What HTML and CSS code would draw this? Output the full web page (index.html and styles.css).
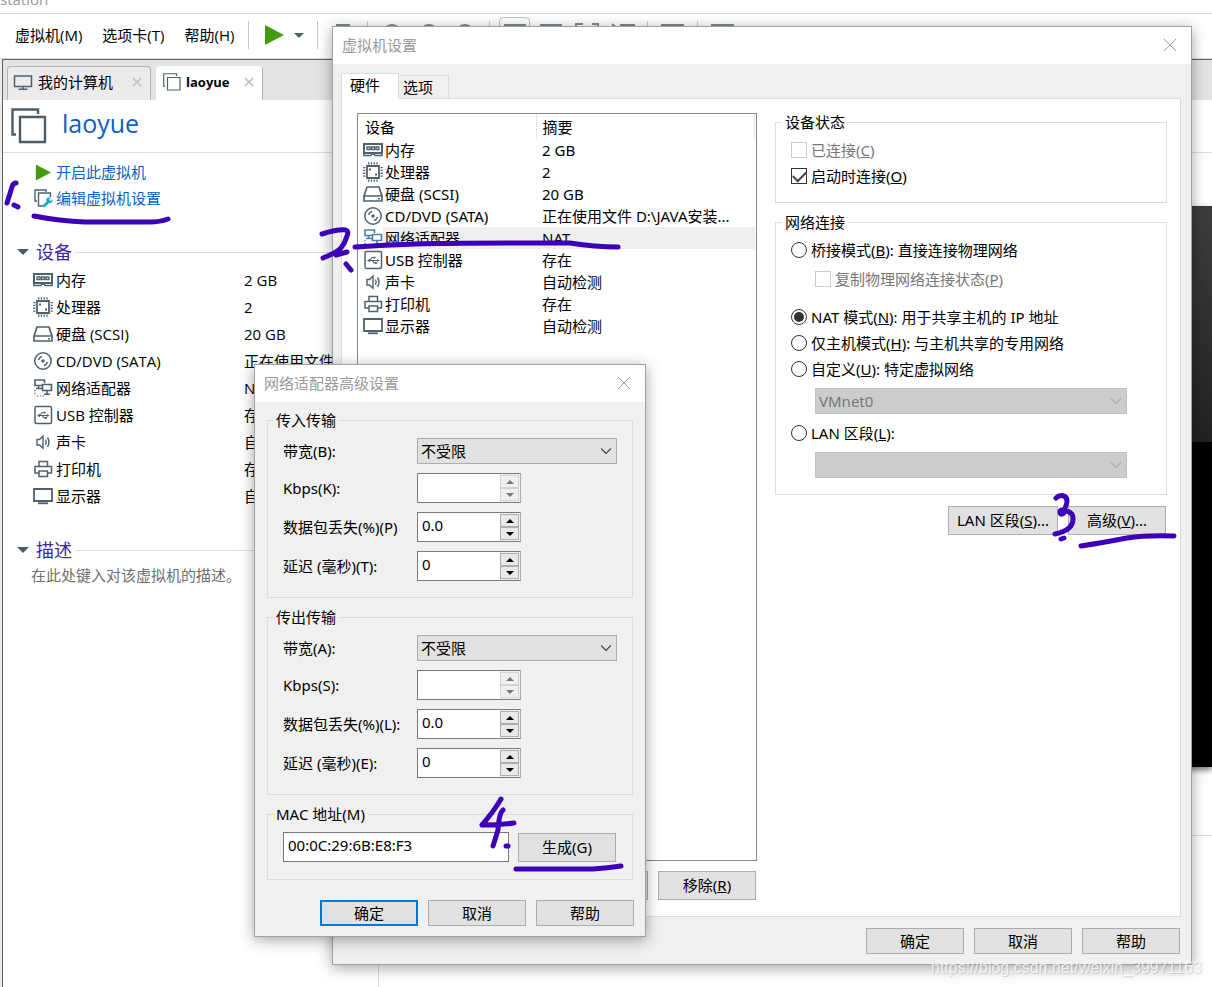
FILE: index.html
```html
<!DOCTYPE html>
<html lang="zh-CN">
<head>
<meta charset="utf-8">
<title>Workstation</title>
<link rel="stylesheet" href="styles.css">
</head>
<body>
<svg class="defs" aria-hidden="true">
  <symbol id="i-memory" viewBox="0 0 20 20"><g fill="none" stroke="currentColor"><path d="M1 4h18v9H1z" stroke-width="2"/><path d="M4 7h3v2.500H4zM8.500 7h3v2.500h-3zM13 7h3v2.500h-3z" stroke-width="1.300"/><path d="M1 13v2.500h7l1-1.500h2l1 1.500h7V13" stroke-width="1.500"/></g></symbol>
  <symbol id="i-cpu" viewBox="0 0 20 20"><g fill="none" stroke="currentColor"><path d="M4 4h12v12H4z" stroke-width="1.800"/><path d="M5 1.300h10M5 18.700h10" stroke-width="2.200" stroke-dasharray="1.300 1.500"/><path d="M1.300 5v10M18.700 5v10" stroke-width="2.200" stroke-dasharray="1.300 1.500"/></g><path fill="currentColor" d="M6 6.500h2v2H6zM12 11.500h2v2h-2z"/></symbol>
  <symbol id="i-disk" viewBox="0 0 20 20"><g fill="none" stroke="currentColor" stroke-width="1.700"><path d="M1 12 4 3h12l3 9v5H1zM1 12h18"/></g><path fill="currentColor" d="M15 14h2v1.500h-2z"/></symbol>
  <symbol id="i-cd" viewBox="0 0 20 20"><g fill="none" stroke="currentColor" stroke-width="1.500"><circle cx="10" cy="10" r="8.200"/><path d="M5.500 9A5 5 0 0 1 9 5.500M14.500 11a5 5 0 0 1-3.500 3.500"/></g><circle cx="10" cy="10" r="1.700" fill="currentColor"/></symbol>
  <symbol id="i-net" viewBox="0 0 20 20"><g fill="none" stroke="currentColor" stroke-width="1.600"><path d="M9 7.500H2V2h9.500v3M9.500 6.500h9v6h-9z"/><path d="M5.500 7.500v3M3 10.500h6M14 12.500v3.500M11 16.300h6"/><path d="M2 12v6M4 18h8" stroke-dasharray="1.300 1.500" stroke-width="1.200"/></g></symbol>
  <symbol id="i-usb" viewBox="0 0 20 20"><g fill="none" stroke="currentColor" stroke-width="1.500"><rect x="2" y="1.500" width="16.500" height="17" rx="1.500"/><path d="M5 10.500h10M7 10.500l2-3h2M9 10.500l2 2.500h2" stroke-width="1.100"/></g><path fill="currentColor" d="M4 10.500 7 8.800v3.400zM10.500 6.700h2v1.800h-2zM12 12h2v1.800h-2zM14 9l2.500 1.500L14 12z"/></symbol>
  <symbol id="i-sound" viewBox="0 0 20 20"><g fill="none" stroke="currentColor" stroke-width="1.400"><path d="M4 7.500h2.500L10 4.200v12L6.500 13H4zM12.500 7.500q1.500 2.700 0 5.400M14.500 5.500q3 4.700 0 9.400"/></g></symbol>
  <symbol id="i-print" viewBox="0 0 20 20"><g fill="none" stroke="currentColor" stroke-width="1.500"><path d="M6 7V2.500h8.500V7M6 14H2V7.500h16.500V14H14"/><path d="M6 12h8.500v5.500H6z"/></g></symbol>
  <symbol id="i-display" viewBox="0 0 20 20"><g fill="none" stroke="currentColor" stroke-width="1.800"><path d="M1 3h18v12H1z"/><path d="M5 17.300h10"/></g></symbol>
  <symbol id="i-pc" viewBox="0 0 20 20"><g fill="none" stroke="currentColor" stroke-width="1.500"><path d="M1.500 4h17v10.500h-17z"/><path d="M10 14.500V17M5.500 17.300h9"/></g></symbol>
  <symbol id="i-vm" viewBox="0 0 36 36"><g fill="none" stroke="currentColor" stroke-width="2.400"><path d="M5 26.500H1.500V1.500H27V6"/><path d="M9 9h25v25H9z"/></g></symbol>
  <symbol id="i-vmedit" viewBox="0 0 20 20"><g fill="none" stroke="#50616e" stroke-width="1.400"><path d="M4 13H2V2h11v2"/><path d="M11 18H5.500V5h12v4"/></g><path d="M10.500 18.500l5-5" stroke="#10a9c9" stroke-width="2.600"/><path d="M13.500 13.500a3 3 0 0 1 4-4l-1.500 2 1.500 1.500 2-1.500a3 3 0 0 1-4 3.500z" fill="#10a9c9"/></symbol>
  <symbol id="i-play" viewBox="0 0 20 20"><path d="M1 0 20 10 1 20z" fill="#46980f"/></symbol>
  <symbol id="i-x" viewBox="0 0 12 12"><path d="M0 0 12 12M12 0 0 12" fill="none" stroke="currentColor"/></symbol>
  <symbol id="i-xb" viewBox="0 0 12 12"><path d="M1 1 11 11M11 1 1 11" fill="none" stroke="currentColor" stroke-width="2.200"/></symbol>
  <symbol id="i-chev" viewBox="0 0 10 6"><path d="M0 .5 5 5.500 10 .5" fill="none" stroke="currentColor" stroke-width="1.200"/></symbol>
  <symbol id="i-down" viewBox="0 0 12 6"><path d="M0 0h12L6 6z" fill="currentColor"/></symbol>
  <symbol id="i-up" viewBox="0 0 12 6"><path d="M0 6h12L6 0z" fill="currentColor"/></symbol>
</svg>

<div class="desktop">
  <header class="titlebar">station</header>
  <nav class="menubar">
    <div class="menus">
      <button>虚拟机(M)</button>
      <button>选项卡(T)</button>
      <button>帮助(H)</button>
    </div>
    <span class="sep"></span>
    <button class="play" aria-label="启动"><svg width="20" height="20"><use href="#i-play"/></svg></button>
    <button class="play" aria-label="电源选项"><svg class="slate" width="10" height="5"><use href="#i-down"/></svg></button>
    <span class="sep"></span>
    <svg class="tools" width="404" height="36" viewBox="0 0 404 36" aria-hidden="true">
      <g fill="none" stroke="#7d8890" stroke-width="2"><path d="M1 24V8h12v16M169 8h20v14h-20zM205 8h20v14h-20zM240 12V7h7M256 7h6v5M276 7l6 5M284 8h14v14M326 8h21v14h-21zM376 8h21v14h-21z"/><circle cx="56" cy="17" r="9"/><circle cx="93" cy="17" r="9"/><circle cx="129" cy="17" r="9"/></g>
      <rect x="163.500" y=".5" width="30" height="34" rx="4" fill="none" stroke="#c0c0c0"/>
      <path d="M31.500 4v28M153.500 4v28M311.500 4v28M361.500 4v28" stroke="#c8c8c8"/>
    </svg>
  </nav>
  <div class="frame">
    <div class="tabs">
      <div class="tab"><svg width="20" height="20"><use href="#i-pc"/></svg><span>我的计算机</span><button aria-label="关闭标签"><svg width="10" height="10"><use href="#i-xb"/></svg></button></div>
      <div class="tab current"><svg width="18" height="18"><use href="#i-vm"/></svg><span>laoyue</span><button aria-label="关闭标签"><svg width="10" height="10"><use href="#i-xb"/></svg></button></div>
    </div>
    <div class="vmhead"><svg width="36" height="36"><use href="#i-vm"/></svg><h1>laoyue</h1></div>
    <div class="content">
      <aside class="side">
        <div class="links">
          <a href="#"><svg width="16" height="17"><use href="#i-play"/></svg>开启此虚拟机</a>
          <a href="#"><svg width="20" height="20"><use href="#i-vmedit"/></svg>编辑虚拟机设置</a>
        </div>
        <h2><svg width="12" height="6"><use href="#i-down"/></svg><span>设备</span></h2>
        <table class="hw">
          <tr><th><svg><use href="#i-memory"/></svg>内存</th><td>2 GB</td></tr>
          <tr><th><svg><use href="#i-cpu"/></svg>处理器</th><td>2</td></tr>
          <tr><th><svg><use href="#i-disk"/></svg>硬盘 (SCSI)</th><td>20 GB</td></tr>
          <tr><th><svg><use href="#i-cd"/></svg>CD/DVD (SATA)</th><td>正在使用文件</td></tr>
          <tr><th><svg><use href="#i-net"/></svg>网络适配器</th><td>NAT</td></tr>
          <tr><th><svg><use href="#i-usb"/></svg>USB 控制器</th><td>存在</td></tr>
          <tr><th><svg><use href="#i-sound"/></svg>声卡</th><td>自动检测</td></tr>
          <tr><th><svg><use href="#i-print"/></svg>打印机</th><td>存在</td></tr>
          <tr><th><svg><use href="#i-display"/></svg>显示器</th><td>自动检测</td></tr>
        </table>
        <h2 class="desc"><svg width="12" height="6"><use href="#i-down"/></svg><span>描述</span></h2>
        <p>在此处键入对该虚拟机的描述。</p>
      </aside>
      <main class="stage"><div class="preview"></div><hr></main>
    </div>
  </div>

  <section class="dialog settings" aria-label="虚拟机设置">
    <div class="dtitle"><span>虚拟机设置</span><button aria-label="关闭"><svg width="12" height="12"><use href="#i-x"/></svg></button></div>
    <div class="pagetabs"><button class="on">硬件</button><button>选项</button></div>
    <div class="page">
      <div class="left">
        <div class="listbox">
          <table class="list">
            <thead><tr><th>设备</th><th>摘要</th></tr></thead>
            <tbody>
              <tr><td><svg><use href="#i-memory"/></svg><span>内存</span></td><td>2 GB</td></tr>
              <tr><td><svg><use href="#i-cpu"/></svg><span>处理器</span></td><td>2</td></tr>
              <tr><td><svg><use href="#i-disk"/></svg><span>硬盘 (SCSI)</span></td><td>20 GB</td></tr>
              <tr><td><svg><use href="#i-cd"/></svg><span>CD/DVD (SATA)</span></td><td>正在使用文件 D:\JAVA安装...</td></tr>
              <tr class="sel"><td><svg><use href="#i-net"/></svg><span>网络适配器</span></td><td>NAT</td></tr>
              <tr><td><svg><use href="#i-usb"/></svg><span>USB 控制器</span></td><td>存在</td></tr>
              <tr><td><svg><use href="#i-sound"/></svg><span>声卡</span></td><td>自动检测</td></tr>
              <tr><td><svg><use href="#i-print"/></svg><span>打印机</span></td><td>存在</td></tr>
              <tr><td><svg><use href="#i-display"/></svg><span>显示器</span></td><td>自动检测</td></tr>
            </tbody>
          </table>
        </div>
        <div class="btnrow"><button class="btn tall" aria-label="添加"></button><button class="btn tall">移除(<u>R</u>)</button></div>
      </div>
      <div class="right">
        <fieldset class="state">
          <legend>设备状态</legend>
          <label class="off"><input type="checkbox" disabled>已连接(<u>C</u>)</label>
          <label><input type="checkbox" checked>启动时连接(<u>O</u>)</label>
        </fieldset>
        <fieldset class="conn">
          <legend>网络连接</legend>
          <label><input type="radio" name="net">桥接模式(<u>B</u>): 直接连接物理网络</label>
          <label class="off sub"><input type="checkbox" disabled>复制物理网络连接状态(<u>P</u>)</label>
          <label><input type="radio" name="net" checked>NAT 模式(<u>N</u>): 用于共享主机的 IP 地址</label>
          <label><input type="radio" name="net">仅主机模式(<u>H</u>): 与主机共享的专用网络</label>
          <label><input type="radio" name="net">自定义(<u>U</u>): 特定虚拟网络</label>
          <div class="combo wide"><select disabled aria-label="特定虚拟网络"><option>VMnet0</option></select><svg width="10" height="6"><use href="#i-chev"/></svg></div>
          <label><input type="radio" name="net">LAN 区段(<u>L</u>):</label>
          <div class="combo wide"><select disabled aria-label="LAN 区段"><option></option></select><svg width="10" height="6"><use href="#i-chev"/></svg></div>
        </fieldset>
        <div class="btnrow"><button class="btn tall lan">LAN 区段(<u>S</u>)...</button><button class="btn tall">高级(<u>V</u>)...</button></div>
      </div>
    </div>
    <div class="btnrow foot"><button class="btn">确定</button><button class="btn">取消</button><button class="btn">帮助</button></div>
  </section>

  <section class="dialog advanced" aria-label="网络适配器高级设置">
    <div class="dtitle"><span>网络适配器高级设置</span><button aria-label="关闭"><svg width="12" height="12"><use href="#i-x"/></svg></button></div>
    <form class="dbody">
      <fieldset class="xfer">
        <legend>传入传输</legend>
        <label for="bw1">带宽(B):</label><div class="combo"><select id="bw1"><option>不受限</option></select><svg width="10" height="6"><use href="#i-chev"/></svg></div>
        <label for="k1">Kbps(K):</label><div class="spin dim"><input id="k1" type="text" disabled><button type="button" disabled aria-label="增加"><svg><use href="#i-up"/></svg></button><button type="button" disabled aria-label="减少"><svg><use href="#i-down"/></svg></button></div>
        <label for="p1">数据包丢失(%)(P)</label><div class="spin"><input id="p1" type="text" value="0.0"><button type="button" aria-label="增加"><svg><use href="#i-up"/></svg></button><button type="button" aria-label="减少"><svg><use href="#i-down"/></svg></button></div>
        <label for="t1">延迟 (毫秒)(T):</label><div class="spin"><input id="t1" type="text" value="0"><button type="button" aria-label="增加"><svg><use href="#i-up"/></svg></button><button type="button" aria-label="减少"><svg><use href="#i-down"/></svg></button></div>
      </fieldset>
      <fieldset class="xfer">
        <legend>传出传输</legend>
        <label for="bw2">带宽(A):</label><div class="combo"><select id="bw2"><option>不受限</option></select><svg width="10" height="6"><use href="#i-chev"/></svg></div>
        <label for="k2">Kbps(S):</label><div class="spin dim"><input id="k2" type="text" disabled><button type="button" disabled aria-label="增加"><svg><use href="#i-up"/></svg></button><button type="button" disabled aria-label="减少"><svg><use href="#i-down"/></svg></button></div>
        <label for="p2">数据包丢失(%)(L):</label><div class="spin"><input id="p2" type="text" value="0.0"><button type="button" aria-label="增加"><svg><use href="#i-up"/></svg></button><button type="button" aria-label="减少"><svg><use href="#i-down"/></svg></button></div>
        <label for="t2">延迟 (毫秒)(E):</label><div class="spin"><input id="t2" type="text" value="0"><button type="button" aria-label="增加"><svg><use href="#i-up"/></svg></button><button type="button" aria-label="减少"><svg><use href="#i-down"/></svg></button></div>
      </fieldset>
      <fieldset class="mac">
        <legend>MAC 地址(M)</legend>
        <input type="text" value="00:0C:29:6B:E8:F3" aria-label="MAC 地址"><button type="button" class="btn tall">生成(G)</button>
      </fieldset>
      <div class="btnrow foot"><button type="button" class="btn primary">确定</button><button type="button" class="btn">取消</button><button type="button" class="btn">帮助</button></div>
    </form>
  </section>

  <svg class="ink" width="1212" height="987" viewBox="0 0 1212 987" aria-hidden="true">
    <path d="M16 183q-3 0-4 4l-5 16M14 205l4 2"/>
    <path d="M34 216q26 5 51 6h65q10 0 18-3"/>
    <path d="M322 234q16-5 24-4 3 1 1 6-2 7-6 12-5 5-18 10M336 255l11-3M346 264l5 6"/>
    <path d="M355 247q30-2 60-3 30-1 92-1h63q25 4 48 4"/>
    <path d="M1056 498c4-4 11-3 11 3s-3 9-6 13c4-5 12-3 12 5 0 9-8 13-18 15M1061 539l3-1"/><circle cx="1062" cy="512" r="2"/>
    <path d="M1081 546q20-3 46-8 20-3 47-2"/>
    <path d="M501 799q-7 12-19 26 16 0 32-2M503 810q-4 3-5 20l-5 16M506 846h2"/>
    <path d="M516 869h77q15-1 28-3"/>
  </svg>
  <div class="watermark">https://blog.csdn.net/weixin_39971163</div>
</div>
</body>
</html>
```
FILE: styles.css
```css
* { box-sizing: border-box; }
body {
  margin: 0;
  font: 15px/20px "Noto Sans", "Noto Sans CJK SC", sans-serif;
  color: #000;
  background: #fff;
}
button, input, select { font: inherit; color: inherit; margin: 0; padding: 0; border-radius: 0; }
button { background: none; border: 0; white-space: nowrap; }
svg { flex: none; display: block; }
.defs { position: absolute; width: 0; height: 0; }

.desktop {
  position: relative;
  display: flex;
  flex-direction: column;
  min-height: 100vh;
  overflow: hidden;
  font-family: "Open Sans", "Noto Sans CJK SC", sans-serif;
}

/* main window */
.titlebar {
  display: flex;
  align-items: flex-end;
  height: 14px;
  padding-bottom: 4px;
  overflow: hidden;
  border-bottom: 1px solid #dcdcdc;
  color: #999;
}
.menubar {
  display: flex;
  align-items: center;
  height: 45px;
  padding: 0 0 2px 15px;
  border-bottom: 1px solid #ddd;
}
.menus { display: flex; gap: 20px; margin-right: 14px; }
.menubar .play { margin-right: 10px; }
.menubar .sep { width: 1px; height: 28px; background: #c4c4c4; }
.menubar .sep + .play { margin-left: 15px; }
.menubar .play + .sep { margin-left: 3px; }
.tools { margin-left: 18px; }
.slate { color: #50616e; }
.frame {
  flex: 1;
  display: flex;
  flex-direction: column;
  margin-left: 2px;
  border: solid #626262;
  border-width: 1px 0 0 1px;
  box-shadow: -2px 0 #ececec;
}
.tabs {
  display: flex;
  gap: 5px;
  height: 40px;
  padding: 6px 4px 0;
  background: #e2e3e5;
}
.tab {
  display: flex;
  align-items: center;
  gap: 5px;
  padding: 0 8px 3px 5px;
  border: 1px solid #b4b4b4;
  border-bottom: 0;
  border-radius: 4px 4px 0 0;
  background: #ebebec;
}
.tab svg { color: #50616e; }
.tab button { margin-left: 14px; }
.tab button svg { color: #c4c4c4; }
.tab.current { padding-left: 6px; background: #fff; border-color: #fff #b4b4b4 #fff #fff; font-weight: bold; font-size: 13px; }
.tab.current button { margin-left: 9px; }
.vmhead {
  display: flex;
  align-items: center;
  gap: 15px;
  height: 53px;
  padding-left: 8px;
  border-bottom: 1px solid #dcdcdc;
  color: #4a5c69;
}
.vmhead h1 { margin: 0 0 6px; font-size: 25px; line-height: 32px; font-weight: normal; color: #0b60c8; }
.content { flex: 1; display: flex; }
.side { width: 376px; border-right: 1px solid #dcdcdc; }
.links { display: flex; flex-direction: column; align-items: flex-start; padding: 6px 0 0 30px; }
.links a { display: flex; align-items: center; gap: 3px; height: 26px; color: #0b60c8; text-decoration: none; }
.links a:first-child svg { margin: 0 2px; }
.side h2 {
  display: flex;
  align-items: center;
  gap: 7px;
  margin: 29px 0 0;
  padding-left: 14px;
  font-size: 18px;
  line-height: 24px;
  font-weight: normal;
  color: #4026a0;
}
.side h2 svg { color: #4a5c69; }
.side h2::after { content: ""; flex: 1; height: 1px; margin-left: -4px; background: #dcdcdc; }
.side p { margin: 3px 0 0 28px; color: #707070; }
.hw { margin: 2px 0 0 30px; border-collapse: collapse; }
.hw th { display: flex; align-items: center; gap: 3px; width: 211px; height: 27px; padding: 0; font-weight: normal; }
.hw td { padding: 0; white-space: nowrap; }
.hw svg, .list svg { width: 20px; height: 20px; color: #50616e; }
.stage { flex: 1; padding-top: 53px; }
.preview {
  height: 561px;
  background: linear-gradient(#3d3d3d, #222 42%, #000 42%);
  box-shadow: 0 3px 6px #777;
}
.stage hr { margin: 68px 0 0; border: 0; border-top: 1px solid #dcdcdc; }

/* dialogs */
.dialog {
  position: absolute;
  display: flex;
  flex-direction: column;
  border: 1px solid #a0a0a0;
  background: #f0f0f0;
  box-shadow: 0 3px 14px rgba(0, 0, 0, .36);
  font-family: "Noto Sans", "Noto Sans CJK SC", sans-serif;
}
.settings { left: 332px; top: 26px; right: 20px; bottom: 22px; }
.advanced { left: 254px; top: 364px; width: 392px; }
.dtitle {
  display: flex;
  align-items: center;
  justify-content: space-between;
  height: 37px;
  padding: 0 15px 2px 9px;
  background: #fff;
  color: #999;
}
.pagetabs { display: flex; align-items: flex-end; padding: 9px 0 0 8px; }
.pagetabs button { height: 23px; padding: 0 15px 0 4px; border: 1px solid #dcdcdc; border-width: 1px 1px 0 0; }
.pagetabs .on {
  height: 26px;
  margin-bottom: -1px;
  padding: 0 18px 3px 8px;
  border-left-width: 1px;
  background: #fff;
  z-index: 1;
}
.page {
  flex: 1;
  display: flex;
  gap: 18px;
  margin: 0 10px 0 8px;
  padding: 13px 13px 16px 15px;
  border: 1px solid #dcdcdc;
  background: #fff;
}
.left { display: flex; flex-direction: column; gap: 10px; width: 400px; margin-top: 1px; }
.right { flex: 1; }
.listbox { flex: 1; border: 1px solid #828790; }
.list { width: 397px; border-collapse: collapse; }
.list th { height: 25px; padding: 0 0 0 7px; border-right: 1px solid #e5e5e5; font-weight: normal; text-align: left; }
.list th:first-child { width: 178px; }
.list th + th { padding-left: 6px; }
.list td { height: 22px; padding: 0 0 0 6px; line-height: 20px; white-space: nowrap; }
.list td:first-child { display: flex; align-items: center; padding-left: 5px; }
.list td span { flex: 1; padding-left: 2px; line-height: 22px; }
.list .sel td + td, .list .sel span { background: #efefef; }
.list .sel svg { color: #4b7fa5; }
.btnrow { display: flex; justify-content: flex-end; gap: 10px; }
.left .btnrow { padding-right: 1px; }
.right .btnrow { padding: 11px 1px 0 0; }
.btn { width: 98px; height: 26px; border: 1px solid #adadad; background: #e1e1e1; }
.btn.tall { height: 29px; padding-bottom: 2px; }
.btn.lan { width: 110px; }
.btn.primary { border: 2px solid #0078d7; }
.settings > .foot { padding: 11px 11px 10px 0; }

fieldset { min-width: 0; margin: 0; border: 1px solid #dcdcdc; }
legend { padding: 0 3px; line-height: 20px; }
.state, .conn { display: flex; flex-direction: column; align-items: flex-start; padding: 5px 6px 13px; }
.conn { margin-top: 9px; padding-bottom: 16px; }
.right label { display: flex; align-items: center; height: 26px; margin-left: 9px; white-space: pre; }
.right label.off { color: #777; }
.right label.sub { margin: 3px 0 12px 33px; }
.right label input {
  appearance: none;
  display: grid;
  place-items: center;
  width: 16px;
  height: 16px;
  margin-right: 4px;
  border: 1px solid #333;
  background: #fff;
}
.right label input:disabled { border-color: #ccc; }
.right label input[type="radio"] { border-radius: 50%; }
.right label input[type="radio"]:checked::after { content: ""; width: 10px; height: 10px; border-radius: 50%; background: #333; }
.right label input[type="checkbox"]:checked::after {
  content: "";
  width: 11px;
  height: 6px;
  margin-bottom: 3px;
  border: solid #444;
  border-width: 0 0 2px 2px;
  transform: rotate(-45deg);
}

.combo { display: grid; align-items: center; width: 200px; height: 26px; color: #000; }
.combo select, .combo svg { grid-area: 1 / 1; }
.combo select {
  appearance: none;
  width: 100%;
  height: 100%;
  padding: 0 24px 1px 3px;
  border: 1px solid #adadad;
  background: #e1e1e1;
}
.combo svg { justify-self: end; margin-right: 6px; color: #444; pointer-events: none; }
.combo select:disabled { border-color: #bfbfbf; background: #ccc; color: #777; opacity: 1; }
.combo select:disabled + svg { color: #aaa; }
.combo.wide { width: 312px; margin: 6px 0 6px 33px; }
.combo.wide:last-child { margin-bottom: 0; }

.dbody { display: flex; flex-direction: column; gap: 9px; padding: 8px 12px 10px; }
.xfer { display: grid; grid-template-columns: 134px auto; justify-content: start; align-items: center; row-gap: 9px; padding: 8px 5px 16px; }
.xfer label { padding-left: 10px; white-space: nowrap; }
.xfer .combo, .xfer .spin { margin-left: 10px; }
.spin {
  display: grid;
  grid-template: 1fr 1fr / 82px 19px;
  width: 104px;
  height: 30px;
  border: 1px solid #7a7a7a;
  border-right-color: #adadad;
  background: #f0f0f0;
}
.spin input { grid-row: 1 / 3; width: 100%; min-width: 0; height: 28px; padding: 0 4px 5px; border: 0; background: #fff; }
.spin button { display: grid; place-items: center; margin: 1px 0 0; border: 1px solid #adadad; background: #e9e9e9; }
.spin button:last-child { margin: 0 0 1px; }
.spin button svg { width: 8px; height: 4px; }
.spin.dim button { border-color: #d4d4d4; background: #f0f0f0; color: #777; }
.mac { display: flex; gap: 9px; padding: 8px 5px 17px 15px; }
.mac legend { margin-left: -10px; }
.mac input { width: 226px; height: 30px; padding: 0 4px 5px; border: 1px solid #7a7a7a; background: #fff; }
.mac .btn { margin-top: 1px; }
.dbody .foot { padding-top: 11px; margin-right: -1px; }

/* marks over the windows */
.ink { position: absolute; left: 0; top: 0; fill: none; stroke: #3d00b8; stroke-width: 5; stroke-linecap: round; stroke-linejoin: round; pointer-events: none; }
.watermark {
  position: absolute;
  right: 10px;
  bottom: 9px;
  font: 16px/20px "Liberation Sans", Arial, sans-serif;
  color: rgba(255, 255, 255, .75);
  text-shadow: 1px 1px 1px rgba(0, 0, 0, .16);
}
```
